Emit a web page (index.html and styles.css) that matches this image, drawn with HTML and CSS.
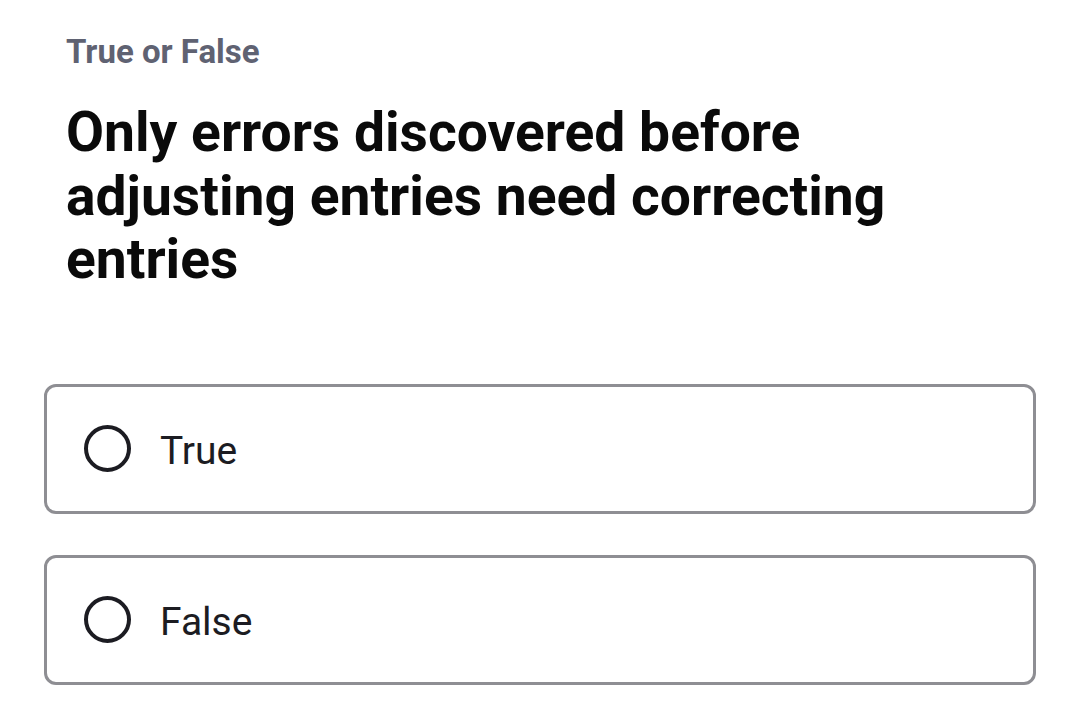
FILE: index.html
```html
<!DOCTYPE html>
<html>
<head>
<meta charset="utf-8">
<link rel="stylesheet" href="styles.css">
</head>
<body>
<div class="page">
  <div class="label">True or False</div>
  <h1 class="question">Only errors discovered before adjusting entries need correcting entries</h1>
  <div class="options">
    <div class="option"><span class="radio"></span><span class="opt-text">True</span></div>
    <div class="option"><span class="radio"></span><span class="opt-text">False</span></div>
  </div>
</div>
</body>
</html>
```
FILE: styles.css
```css
html, body {
  margin: 0;
  padding: 0;
  background: #ffffff;
}
body {
  font-family: Roboto, "Liberation Sans", sans-serif;
}
.page {
  padding: 30px 44px 0 44px;
  width: 992px;
}
.label {
  margin-left: 22px;
  font-size: 33px;
  line-height: 44px;
  font-weight: 700;
  color: #5f6272;
}
.question {
  margin: 27px 0 0 22px;
  font-size: 55.2px;
  line-height: 63.5px;
  font-weight: 700;
  color: #0a0a0a;
  width: 880px;
}
.options {
  margin-top: 92px;
  display: flex;
  flex-direction: column;
  gap: 41px;
}
.option {
  box-sizing: border-box;
  height: 130px;
  border: 3px solid #8e8e93;
  border-radius: 12px;
  display: flex;
  align-items: center;
  padding-left: 37px;
}
.radio {
  box-sizing: border-box;
  width: 47px;
  height: 47px;
  border: 4px solid #1c1c22;
  border-radius: 50%;
  flex: none;
}
.opt-text {
  margin-left: 29px;
  padding-top: 4px;
  font-size: 39px;
  color: #1c1c22;
}
```
